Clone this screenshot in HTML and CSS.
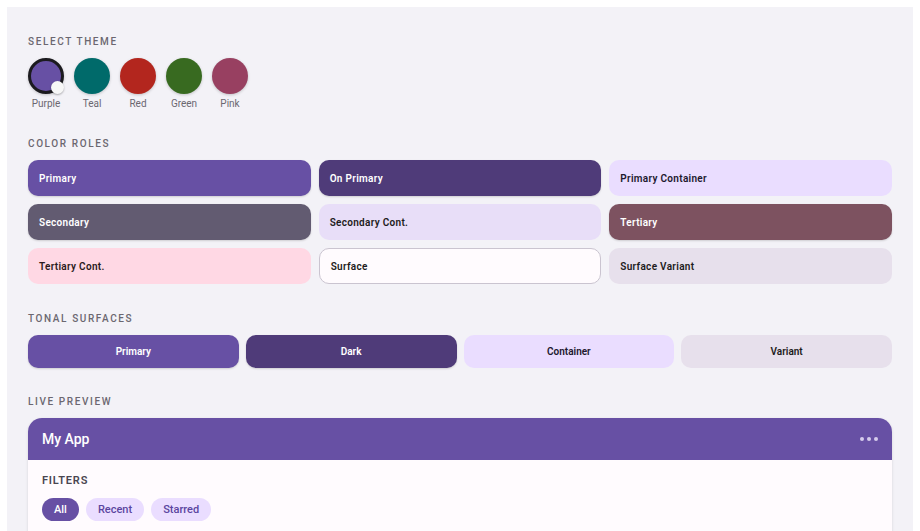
FILE: index.html
```html
<!DOCTYPE html>
<html lang="en">
<head>
    <meta charset="UTF-8">
    <meta name="viewport" content="width=device-width, initial-scale=1.0">
    <title>Theme Builder</title>
    <link rel="stylesheet" href="styles.css">
</head>
<body>

    <div class="panel">

        <div class="section">
            <div class="label">Select Theme</div>
            <div class="swatches">
                <div class="swatch">
                    <div class="dot purple selected"><span class="check"></span></div>
                    <span>Purple</span>
                </div>
                <div class="swatch">
                    <div class="dot teal"></div>
                    <span>Teal</span>
                </div>
                <div class="swatch">
                    <div class="dot red"></div>
                    <span>Red</span>
                </div>
                <div class="swatch">
                    <div class="dot green"></div>
                    <span>Green</span>
                </div>
                <div class="swatch">
                    <div class="dot pink"></div>
                    <span>Pink</span>
                </div>
            </div>
        </div>

        <div class="section roles-section">
            <div class="label">Color Roles</div>
            <div class="roles">
                <div class="role primary">Primary</div>
                <div class="role on-primary">On Primary</div>
                <div class="role primary-container">Primary Container</div>
                <div class="role secondary">Secondary</div>
                <div class="role secondary-container">Secondary Cont.</div>
                <div class="role tertiary">Tertiary</div>
                <div class="role tertiary-container">Tertiary Cont.</div>
                <div class="role surface">Surface</div>
                <div class="role surface-variant">Surface Variant</div>
            </div>
        </div>

        <div class="section">
            <div class="label">Tonal Surfaces</div>
            <div class="tones">
                <div class="tone primary">Primary</div>
                <div class="tone on-primary">Dark</div>
                <div class="tone primary-container">Container</div>
                <div class="tone surface-variant">Variant</div>
            </div>
        </div>

        <div class="section">
            <div class="label">Live Preview</div>
            <div class="card">
                <div class="appbar">
                    <span class="title">My App</span>
                    <div class="more"><i></i><i></i><i></i></div>
                </div>
                <div class="card-body">
                    <div class="filters-label">FILTERS</div>
                    <div class="chips">
                        <span class="chip active">All</span>
                        <span class="chip">Recent</span>
                        <span class="chip">Starred</span>
                    </div>
                </div>
            </div>
        </div>

    </div>

</body>
</html>
```

FILE: styles.css
```css
body{
    margin: 0;
    padding: 7px 7px 0 7px;
    background: #fff;
    font-family: Roboto, "Noto Sans", sans-serif;
    color: #1d1b20;
}
.panel{
    width: 864px;
    min-height: 524px;
    background: #f3f2f7;
    padding: 29px 21px 0 21px;
}
.section{
    margin-bottom: 28px;
}
.roles-section{
    margin-bottom: 29px;
}
.label{
    font-size: 10px;
    line-height: 12px;
    font-weight: 500;
    letter-spacing: 1.6px;
    text-transform: uppercase;
    color: #6b6770;
    margin-bottom: 10px;
}

/* theme swatches */
.swatches{
    display: flex;
    gap: 10px;
}
.swatch{
    width: 36px;
    display: flex;
    flex-direction: column;
    align-items: center;
    gap: 4px;
    font-size: 10px;
    line-height: 12px;
    color: #6b6770;
}
.swatch span{
    white-space: nowrap;
}
.dot{
    width: 36px;
    height: 36px;
    border-radius: 50%;
    box-sizing: border-box;
    box-shadow: 0 1px 3px rgba(0,0,0,0.2);
    position: relative;
}
.dot.selected{
    border: 3px solid #1c1b1f;
}
.check{
    position: absolute;
    right: -3px;
    bottom: -3px;
    width: 13px;
    height: 13px;
    border-radius: 50%;
    background: #f7f7f7;
    box-shadow: 0 1px 2px rgba(0,0,0,0.3);
}
.purple{ background: #6750a4; }
.teal{ background: #006a6a; }
.red{ background: #b3261e; }
.green{ background: #386a20; }
.pink{ background: #984061; }

/* color roles */
.roles{
    display: grid;
    grid-template-columns: 1fr 1fr 1fr;
    gap: 8px;
}
.role{
    height: 36px;
    box-sizing: border-box;
    border-radius: 10px;
    padding: 0 11px;
    display: flex;
    align-items: center;
    font-size: 10px;
    font-weight: 600;
    letter-spacing: 0.3px;
}
.primary{ background: #6750a4; color: #fff; }
.on-primary{ background: #4f3b79; color: #fff; }
.primary-container{ background: #eaddff; color: #21182e; }
.secondary{ background: #625b71; color: #fff; }
.secondary-container{ background: #e8def8; color: #1d1b20; }
.tertiary{ background: #7d5260; color: #fff; }
.tertiary-container{ background: #ffd8e4; color: #2a1a20; }
.surface{ background: #fffbfe; color: #1d1b20; border: 1px solid #cac4d0; }
.surface-variant{ background: #e7e0ec; color: #1d1b20; }
.primary, .on-primary, .secondary, .tertiary{
    box-shadow: 0 1px 2px rgba(0,0,0,0.15);
}

/* tonal surfaces */
.tones{
    display: grid;
    grid-template-columns: repeat(4, 1fr);
    gap: 7px;
}
.tone{
    height: 33px;
    border-radius: 10px;
    display: flex;
    align-items: center;
    justify-content: center;
    font-size: 10px;
    font-weight: 600;
}

/* live preview */
.card{
    border-radius: 14px 14px 0 0;
    overflow: hidden;
    background: #fffbfe;
    box-shadow: 0 1px 3px rgba(0,0,0,0.12);
}
.appbar{
    height: 42px;
    background: #6750a4;
    display: flex;
    align-items: center;
    justify-content: space-between;
    padding: 0 14px;
}
.title{
    color: #fff;
    font-size: 14px;
    font-weight: 500;
}
.more{
    display: flex;
    gap: 3px;
}
.more i{
    width: 4px;
    height: 4px;
    border-radius: 50%;
    background: #d6ccec;
}
.card-body{
    padding: 14px 14px 20px 14px;
}
.filters-label{
    font-size: 11px;
    line-height: 13px;
    font-weight: 600;
    letter-spacing: 0.8px;
    color: #4a4650;
    margin-bottom: 11px;
}
.chips{
    display: flex;
    gap: 7px;
}
.chip{
    font-size: 11px;
    line-height: 13px;
    font-weight: 500;
    padding: 5px 12px;
    border-radius: 12px;
    background: #eaddff;
    color: #5b45a0;
}
.chip.active{
    background: #6750a4;
    color: #fff;
}
```
